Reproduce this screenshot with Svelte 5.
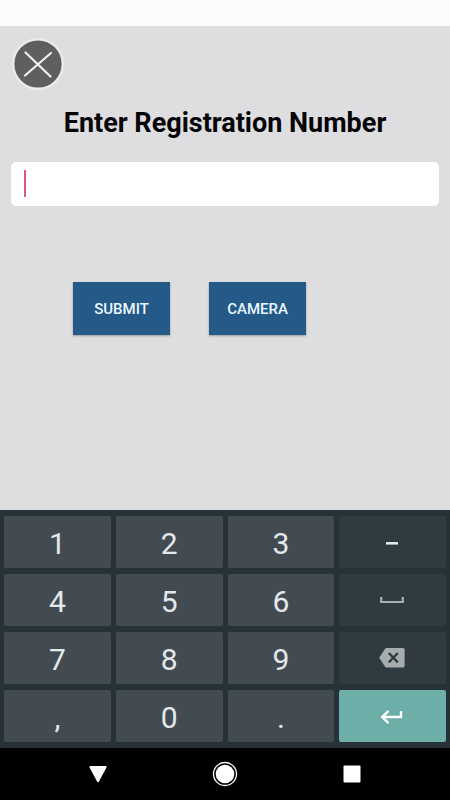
<script lang="ts">
  type Key = { id: string; label: string; kind?: "action" | "enter" };

  const keys: Key[] = [
    { id: "1", label: "1" },
    { id: "2", label: "2" },
    { id: "3", label: "3" },
    { id: "-", label: "Minus", kind: "action" },
    { id: "4", label: "4" },
    { id: "5", label: "5" },
    { id: "6", label: "6" },
    { id: "space", label: "Space", kind: "action" },
    { id: "7", label: "7" },
    { id: "8", label: "8" },
    { id: "9", label: "9" },
    { id: "backspace", label: "Backspace", kind: "action" },
    { id: ",", label: "," },
    { id: "0", label: "0" },
    { id: ".", label: "." },
    { id: "enter", label: "Enter", kind: "enter" },
  ];

  let registration = $state("");

  function press(id: string) {
    if (id === "backspace") {
      registration = registration.slice(0, -1);
    } else if (id === "space") {
      registration += " ";
    } else if (id !== "enter") {
      registration += id;
    }
  }
</script>

<div class="screen">
  <div class="status-bar"></div>

  <main class="content">
    <button class="close" aria-label="Close">
      <svg viewBox="0 0 52 52" width="52" height="52" aria-hidden="true">
        <circle cx="26" cy="26" r="24.8" fill="#5f5e60" stroke="#ebeaec" stroke-width="2.4" />
        <path d="M13.5 14.5 38.5 38.5M39 15 13 37.500" stroke="#f0eff1" stroke-width="2.2" stroke-linecap="round" />
      </svg>
    </button>

    <h1><label for="registration">Enter Registration Number</label></h1>

    <div class="field">
      <input id="registration" type="text" inputmode="numeric" autocomplete="off" bind:value={registration} />
      {#if registration === ""}
        <span class="cursor"></span>
      {/if}
    </div>

    <div class="actions">
      <button class="submit">SUBMIT</button>
      <button class="submit">CAMERA</button>
    </div>
  </main>

  <div class="keyboard">
    {#each keys as key (key.id)}
      <button class="key {key.kind ?? 'char'}" aria-label={key.label} onclick={() => press(key.id)}>
        {#if key.id === "-"}
          <svg viewBox="0 0 28 24" width="28" height="24" aria-hidden="true">
            <path d="M7 13.3h12" stroke="#e3e9ec" stroke-width="2.6" />
          </svg>
        {:else if key.id === "space"}
          <svg viewBox="0 0 28 24" width="28" height="24" aria-hidden="true">
            <path d="M2.2 9v5h21.600V9" fill="none" stroke="#a9b0b4" stroke-width="2.2" />
          </svg>
        {:else if key.id === "backspace"}
          <svg viewBox="0 0 28 24" width="28" height="24" aria-hidden="true">
            <path d="M7.500 2h16.500a1.600 1.600 0 0 1 1.600 1.600v16.200a1.600 1.600 0 0 1-1.600 1.600H7.500a2 2 0 0 1-1.600-.9L.2 11.700l5.700-8.800A2 2 0 0 1 7.500 2z" fill="#a7acaf" />
            <path d="m9.800 7 9 9.400m0-9.400-9 9.400" stroke="#30393f" stroke-width="2.3" />
          </svg>
        {:else if key.id === "enter"}
          <svg viewBox="0 0 28 24" width="28" height="24" aria-hidden="true">
            <path d="M22 7v6H3.500M9.500 6.800 3.200 13l6.300 6.200" fill="none" stroke="#fff" stroke-width="2.4" />
          </svg>
        {:else}
          {key.label}
        {/if}
      </button>
    {/each}
  </div>

  <nav class="nav-bar">
    <button aria-label="Back">
      <svg viewBox="0 0 26 26" width="26" height="26" aria-hidden="true">
        <path d="M5.3 6h15.400L13 20.300z" fill="#fff" stroke="#fff" stroke-width="1.8" stroke-linejoin="round" />
      </svg>
    </button>
    <button aria-label="Home">
      <svg viewBox="0 0 26 26" width="26" height="26" aria-hidden="true">
        <circle cx="13" cy="13" r="11.5" fill="none" stroke="#fff" stroke-width="1.3" />
        <circle cx="13" cy="13" r="9.3" fill="#fff" />
      </svg>
    </button>
    <button aria-label="Recent apps">
      <svg viewBox="0 0 26 26" width="26" height="26" aria-hidden="true">
        <rect x="4.5" y="4.5" width="17" height="17" rx="1" fill="#fff" />
      </svg>
    </button>
  </nav>
</div>

<style>
  :global(body) {
    margin: 0;
    background: #dedddf;
  }

  .screen {
    display: flex;
    flex-direction: column;
    min-height: 100vh;
    background: #dedddf;
    font-family: Roboto, "Liberation Sans", sans-serif;
  }

  button {
    padding: 0;
    border: 0;
    background: none;
    font-family: inherit;
    cursor: pointer;
  }

  svg {
    display: block;
  }

  .status-bar {
    height: 26px;
    background: #fcfafd;
  }

  .content {
    flex: 1;
    padding: 12px 11px;
  }

  .close {
    display: block;
    margin-left: 1px;
    border-radius: 50%;
  }

  h1 {
    margin: 17px 0 23px;
    font-size: 27px;
    line-height: 32px;
    font-weight: 700;
    text-align: center;
    color: #050507;
  }

  .field {
    position: relative;
  }

  input {
    display: block;
    box-sizing: border-box;
    width: 100%;
    height: 44px;
    padding: 0 14px;
    border: 0;
    border-radius: 5px;
    outline: none;
    background: #fff;
    color: #111;
    font-family: inherit;
    font-size: 22px;
    caret-color: #d8497c;
  }

  .cursor {
    position: absolute;
    top: 8px;
    left: 13px;
    width: 2px;
    height: 27px;
    background: #dc5581;
    pointer-events: none;
  }

  input:focus + .cursor {
    display: none;
  }

  .actions {
    display: flex;
    gap: 39px;
    margin-top: 76px;
    padding-left: 62px;
  }

  .submit {
    width: 97px;
    height: 53px;
    background: #245988;
    box-shadow: 0 1px 2px rgba(0, 0, 0, 0.3);
    color: #e9f8ff;
    font-size: 15px;
    font-weight: 500;
  }

  .keyboard {
    display: grid;
    grid-template-columns: repeat(4, 1fr);
    gap: 6px 5px;
    padding: 6px 4px;
    background: #263238;
  }

  .key {
    display: flex;
    align-items: center;
    justify-content: center;
    height: 52px;
    border-radius: 2px;
    color: #e1e9ed;
    font-size: 30px;
    line-height: 36px;
  }

  .key.char {
    padding-top: 3px;
    background: #414b51;
  }

  .key.action {
    background: #303b41;
  }

  .key.enter {
    background: #6eaea9;
  }

  .nav-bar {
    display: grid;
    grid-template-columns: repeat(3, 1fr);
    align-items: center;
    justify-items: center;
    height: 52px;
    padding: 0 35px;
    background: #000;
  }
</style>
